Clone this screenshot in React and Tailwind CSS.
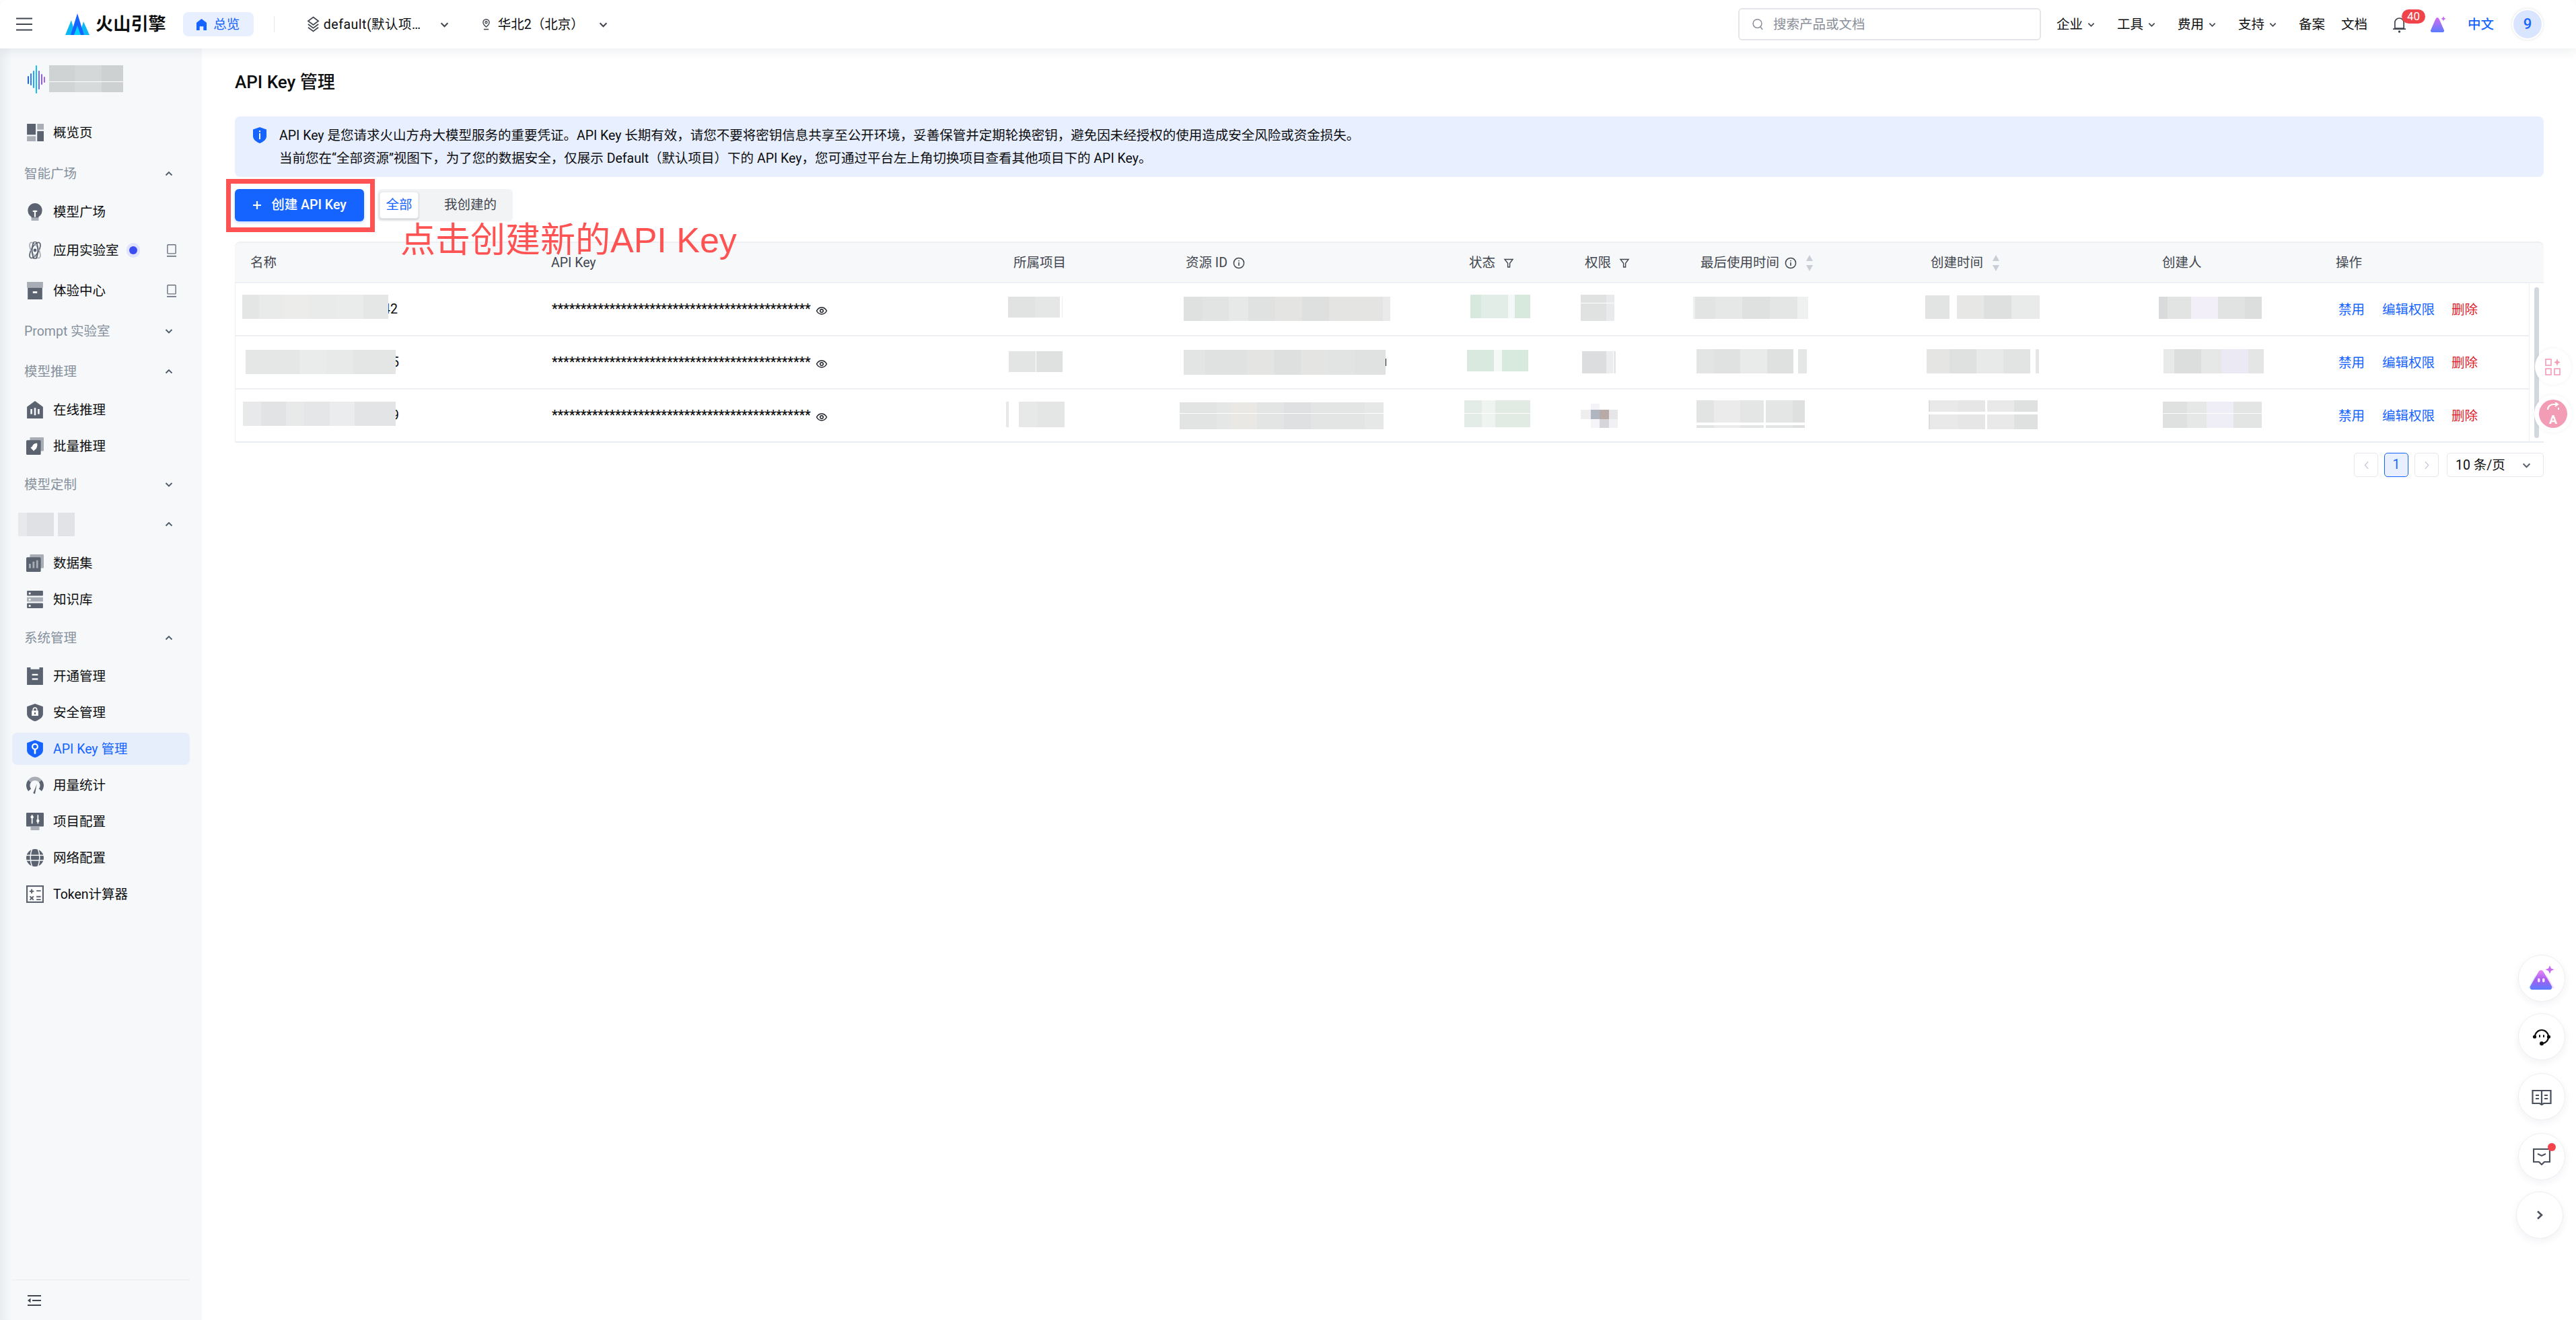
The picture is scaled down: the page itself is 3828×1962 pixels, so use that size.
import React from 'react';

const DK = '#5c6370';
const LT = '#a9aeb6';

const Ic = ({ children, cls = 'w-[26px] h-[26px]', box = '0 0 24 24' }) => (
  <svg viewBox={box} className={cls + ' shrink-0'}>{children}</svg>
);

const Chev = ({ up, cls = 'w-[12px] h-[12px]', color = '#4e5969' }) => (
  <svg viewBox="0 0 12 12" className={cls + ' shrink-0'} fill="none">
    <path d={up ? 'M1.5 8.5 6 4l4.5 4.5' : 'M1.5 4 6 8.5 10.5 4'} stroke={color} strokeWidth="1.9" />
  </svg>
);

const Info = ({ cls = 'w-[18px] h-[18px]' }) => (
  <svg viewBox="0 0 18 18" className={cls + ' shrink-0'} fill="none">
    <circle cx="9" cy="9" r="7.6" stroke="#42464e" strokeWidth="1.5" />
    <path d="M9 8v5M9 5v1.6" stroke="#42464e" strokeWidth="1.6" />
  </svg>
);

const Filter = () => (
  <svg viewBox="0 0 16 16" className="w-[16px] h-[16px] shrink-0" fill="none">
    <path d="M2 2.5h12L9.6 8.2V14H6.6V8.2Z" stroke="#42464e" strokeWidth="1.4" />
  </svg>
);

const Sort = () => (
  <svg viewBox="0 0 12 28" className="w-[12px] h-[28px] shrink-0">
    <path d="M6 2 11 11H1Z" fill="#c9cdd6" />
    <path d="M6 26 1 17H11Z" fill="#c9cdd6" />
  </svg>
);

const Monitor = () => (
  <svg viewBox="0 0 18 24" className="w-[16px] h-[21px] shrink-0" fill="none">
    <rect x="2" y="2" width="14" height="15" rx="1" stroke="#6b7280" strokeWidth="1.6" />
    <path d="M1 21.5h16" stroke="#6b7280" strokeWidth="2" />
  </svg>
);

const icons = {
  overview: (
    <Ic>
      <rect x="1" y="0" width="12" height="15" fill={DK} />
      <rect x="15" y="0" width="9" height="8" fill={LT} />
      <rect x="1" y="17" width="12" height="7" fill={LT} />
      <rect x="15" y="10" width="9" height="14" fill={DK} />
    </Ic>
  ),
  bulb: (
    <Ic>
      <path d="M12 0a10 10 0 0 1 5 18.6V20H7v-1.400A10 10 0 0 1 12 0Z" fill={DK} />
      <rect x="7" y="20" width="10" height="4" fill={LT} />
      <path d="M12 10v9" stroke="#f6f8fa" strokeWidth="2" />
      <path d="M9 11h6" stroke="#f6f8fa" strokeWidth="2" />
    </Ic>
  ),
  atom: (
    <Ic>
      <g fill="none" strokeWidth="1.6">
        <ellipse cx="12" cy="12" rx="5" ry="12" stroke={DK} transform="rotate(30 12 12)" />
        <ellipse cx="12" cy="12" rx="5" ry="12" stroke={LT} transform="rotate(-30 12 12)" />
        <ellipse cx="12" cy="12" rx="12" ry="4" stroke={DK} transform="rotate(90 12 12)" />
      </g>
      <circle cx="12" cy="12" r="2.200" fill={DK} />
    </Ic>
  ),
  box: (
    <Ic>
      <rect x="1" y="0" width="22" height="8" fill={LT} />
      <rect x="2" y="8" width="20" height="16" fill={DK} />
      <rect x="9" y="13" width="6" height="2.500" fill="#fff" />
    </Ic>
  ),
  bank: (
    <Ic>
      <path d="M12 0 23 8v16H1V8Z" fill={DK} />
      <path d="M7 11v7M12 9.500v10M17 11v7" stroke="#f6f8fa" strokeWidth="2.400" />
    </Ic>
  ),
  rocket: (
    <Ic>
      <rect x="5" y="0" width="19" height="19" rx="1" fill={LT} />
      <rect x="0" y="4" width="20" height="20" rx="1.500" fill={DK} />
      <path d="M15 8c-4 0-6 2-7 5l-2 1 1 1.500 2.500 2.500 1 1 1-2c3-1 4-5 3.500-9Z" fill="#fff" />
    </Ic>
  ),
  dataset: (
    <Ic>
      <rect x="5" y="0" width="19" height="19" rx="1" fill={LT} />
      <rect x="0" y="4" width="20" height="20" rx="1.500" fill={DK} />
      <path d="M5 19v-6M10 19v-9M15 19v-11" stroke={LT} strokeWidth="2.600" />
    </Ic>
  ),
  server: (
    <Ic>
      <rect x="1" y="0" width="22" height="7" rx="1" fill={DK} />
      <rect x="1" y="9" width="22" height="6" fill={LT} />
      <rect x="1" y="17" width="22" height="7" rx="1" fill={DK} />
      <rect x="3.500" y="2.500" width="2.500" height="2.500" fill="#fff" />
      <rect x="3.500" y="11" width="2.500" height="2.500" fill="#fff" />
      <rect x="3.500" y="19.500" width="2.500" height="2.500" fill="#fff" />
    </Ic>
  ),
  doc: (
    <Ic>
      <path d="M1 0h5v2.500h12V0h5v24H1Z" fill={DK} />
      <path d="M8 10h8M8 16h8" stroke="#fff" strokeWidth="2.200" />
    </Ic>
  ),
  lock: (
    <Ic>
      <path d="M12 0 23 4v10c0 5-6 8.500-11 10C7 22.500 1 19 1 14V4Z" fill={DK} />
      <rect x="7.500" y="9.500" width="9" height="7" fill="#fff" />
      <path d="M9.500 10V8a2.500 2.500 0 0 1 5 0v2" stroke="#fff" strokeWidth="1.500" fill="none" />
      <rect x="11" y="12" width="2" height="2.500" fill={DK} />
    </Ic>
  ),
  key: (
    <Ic>
      <path d="M12 0 23 4v10c0 5-6 8.500-11 10C7 22.500 1 19 1 14V4Z" fill="#1664ff" />
      <circle cx="12" cy="9" r="3.600" fill="none" stroke="#fff" strokeWidth="2" />
      <path d="M12 12v7" stroke="#fff" strokeWidth="2.400" />
    </Ic>
  ),
  gauge: (
    <Ic>
      <g fill="none" strokeWidth="5">
        <path d="M4.700 18.600A9.500 9.500 0 0 1 4.700 6.400" stroke={DK} />
        <path d="M4.700 6.400A9.500 9.500 0 0 1 19.300 6.400" stroke={LT} />
        <path d="M19.300 6.400A9.500 9.500 0 0 1 19.300 18.600" stroke={DK} />
      </g>
      <path d="M14.500 10.500 12 24 9.500 23Z" fill={DK} />
    </Ic>
  ),
  sliders: (
    <Ic>
      <rect x="0" y="0" width="24" height="19" rx="1" fill={DK} />
      <rect x="6" y="19" width="12" height="5" fill={LT} />
      <path d="M8 3v12M16 3v12" stroke="#fff" strokeWidth="1.600" />
      <circle cx="8" cy="6" r="2" fill="#fff" />
      <circle cx="16" cy="11" r="2" fill="#fff" />
    </Ic>
  ),
  globe: (
    <Ic>
      <circle cx="12" cy="12" r="12" fill={DK} />
      <path d="M0 8.500h24M0 15.500h24" stroke="#f6f8fa" strokeWidth="1.400" />
      <path d="M8 0c-3 7-3 17 0 24M16 0c3 7 3 17 0 24" stroke="#f6f8fa" strokeWidth="1.400" fill="none" />
    </Ic>
  ),
  calc: (
    <Ic>
      <rect x="1" y="1" width="22" height="22" fill="#fff" stroke={DK} strokeWidth="2" />
      <path d="M4.500 8h6M7.500 5v6M5 15l5 5M10 15l-5 5M14 7.500h6M14 15.500h6M14 19.500h6" stroke={DK} strokeWidth="1.800" />
    </Ic>
  ),
};

// centre positions in the sidebar come out of the mt-* values
const navItems = [
  { label: '概览页', icon: 'overview', mt: 'mt-[0px]' },
  { label: '智能广场', group: true, up: true, mt: 'mt-[13px]' },
  { label: '模型广场', icon: 'bulb', mt: 'mt-[9px]' },
  { label: '应用实验室', icon: 'atom', mt: 'mt-[9px]', dot: true, monitor: true },
  { label: '体验中心', icon: 'box', mt: 'mt-[12px]', monitor: true },
  { label: 'Prompt 实验室', group: true, mt: 'mt-[12px]' },
  { label: '模型推理', group: true, up: true, mt: 'mt-[12px]' },
  { label: '在线推理', icon: 'bank', mt: 'mt-[9px]' },
  { label: '批量推理', icon: 'rocket', mt: 'mt-[6px]' },
  { label: '模型定制', group: true, mt: 'mt-[9px]' },
  { blurGroup: true, up: true, mt: 'mt-[11px]' },
  { label: '数据集', icon: 'dataset', mt: 'mt-[10px]' },
  { label: '知识库', icon: 'server', mt: 'mt-[6px]' },
  { label: '系统管理', group: true, up: true, mt: 'mt-[9px]' },
  { label: '开通管理', icon: 'doc', mt: 'mt-[9px]' },
  { label: '安全管理', icon: 'lock', mt: 'mt-[6px]' },
  { label: 'API Key 管理', icon: 'key', mt: 'mt-[6px]', active: true },
  { label: '用量统计', icon: 'gauge', mt: 'mt-[6px]' },
  { label: '项目配置', icon: 'sliders', mt: 'mt-[6px]' },
  { label: '网络配置', icon: 'globe', mt: 'mt-[6px]' },
  { label: 'Token计算器', icon: 'calc', mt: 'mt-[6px]' },
];

function NavRow({ item }) {
  if (item.group || item.blurGroup) {
    return (
      <div className={'h-[48px] flex items-center pl-[36px] pr-[43px] justify-between ' + item.mt}>
        {item.blurGroup ? (
          <div className="flex -ml-[9px]">
            <div className="w-[13px] h-[35px] bg-[#e8e9eb]" />
            <div className="w-[40px] h-[35px] bg-[#dfe1e4]" />
            <div className="w-[6px] h-[35px]" />
            <div className="w-[25px] h-[35px] bg-[#e2e3e6]" />
          </div>
        ) : (
          <span className="pt-[2px] text-[#86909c]">{item.label}</span>
        )}
        <Chev up={item.up} />
      </div>
    );
  }
  return (
    <div
      className={
        'h-[48px] mx-[18px] rounded-[8px] flex items-center pl-[21px] pr-[19px] ' +
        item.mt +
        (item.active ? ' bg-[#e6edfb] text-[#1664ff]' : ' text-[#0c0d0e]')
      }
    >
      <div className="w-[40px] shrink-0 flex items-center">{icons[item.icon]}</div>
      <span className="pt-[2px]">{item.label}</span>
      {item.dot && (
        <span className="ml-[11px] w-[20px] h-[22px] rounded-full bg-[#e0e3fb] flex items-center justify-center">
          <span className="w-[12px] h-[12px] rounded-full bg-[#3b4df0]" />
        </span>
      )}
      {item.monitor && <span className="ml-auto flex"><Monitor /></span>}
    </div>
  );
}

function Sidebar() {
  return (
    <aside className="w-[300px] shrink-0 bg-[#f6f8fa] bg-gradient-to-r from-[#eaedf0] from-0% to-[#f6f8fa] to-[6%] flex flex-col">
      <div className="h-[101px] pl-[41px] flex items-start pt-[25px]">
        <svg viewBox="0 0 26 42" className="w-[26px] h-[42px] shrink-0" fill="none" strokeWidth="2" strokeLinecap="round">
          <path d="M1 17v10" stroke="#1664ff" />
          <path d="M5 13v16" stroke="#2a7bff" />
          <path d="M9 9v24" stroke="#1ea7ff" />
          <path d="M13 1v40" stroke="#18c0f0" />
          <path d="M17 9v26" stroke="#6d6cf5" />
          <path d="M21 14v14" stroke="#8b5cf6" />
          <path d="M25 18v7" stroke="#a465f0" />
        </svg>
        <div className="ml-[6px] w-[110px] h-[40px] flex flex-col">
          <div className="h-[24px] flex">
            <div className="w-[38px] bg-[#cfd3d3]" />
            <div className="w-[40px] bg-[#d4d8d8]" />
            <div className="w-[32px] bg-[#cdd1d1]" />
          </div>
          <div className="h-[1px] bg-white" />
          <div className="h-[15px] flex">
            <div className="w-[38px] bg-[#d0d4d4]" />
            <div className="w-[40px] bg-[#d6dada]" />
            <div className="w-[32px] bg-[#cdd1d1]" />
          </div>
        </div>
      </div>
      <nav className="flex flex-col">
        {navItems.map((it, i) => <NavRow key={i} item={it} />)}
      </nav>
      <div className="mt-auto mx-[18px] h-[60px] border-t-[1.5px] border-[#eaecef] flex items-center pl-[23px] mb-[0px]">
        <svg viewBox="0 0 20 16" className="w-[20px] h-[16px]" fill="none">
          <path d="M0 1h20M7 8h13M0 15h20" stroke="#41464f" strokeWidth="2" />
          <path d="M4.500 4.500v7L0 8Z" fill="#41464f" />
        </svg>
      </div>
    </aside>
  );
}

function TopNav({ label }) {
  return (
    <span className="flex items-center gap-[7px]">
      <span className="pt-[2px]">{label}</span>
      <Chev cls="w-[11px] h-[11px]" color="#41464f" />
    </span>
  );
}

function Header() {
  return (
    <header className="h-[72px] shrink-0 bg-white rounded-t-[10px] shadow-[0_4px_16px_rgba(30,40,60,0.08)] relative z-10 flex items-center text-[#0c0d0e]">
      <svg viewBox="0 0 24 20" className="ml-[24px] w-[24px] h-[20px] shrink-0" fill="none">
        <path d="M0 1.500h24M0 10h24M0 18.500h24" stroke="#41464f" strokeWidth="2.200" />
      </svg>
      <svg viewBox="0 0 36 32" className="ml-[49px] w-[36px] h-[32px] shrink-0">
        <path d="M0 32 9 10l6 22Z" fill="#0bb8f5" />
        <path d="M21 32l6-20 9 20Z" fill="#0bb8f5" />
        <path d="M8 32 18 0l10 32Z" fill="#1664ff" />
        <path d="M13 32l5-14 5 14Z" fill="#06d0ff" />
      </svg>
      <span className="ml-[9px] text-[26px] font-semibold tracking-[0.2px]">火山引擎</span>
      <div className="ml-[25px] w-[105px] h-[36px] rounded-[8px] bg-[#e8efff] flex items-center justify-center gap-[10px] text-[#1664ff]">
        <svg viewBox="0 0 16 18" className="w-[15px] h-[17px]"><path d="M8 0 16 6v12h-5v-6H5v6H0V6Z" fill="#1664ff" /></svg>
        <span className="pt-[2px]">总览</span>
      </div>
      <div className="ml-[30px] w-[1px] h-[24px] bg-[#e5e7eb]" />
      <svg viewBox="0 0 20 24" className="ml-[48px] w-[19px] h-[24px] shrink-0" fill="none">
        <path d="M10 1 18 7l-8 6-8-6Z" stroke="#41464f" strokeWidth="1.800" />
        <path d="M2 12l8 6 8-6M2 17l8 6 8-6" stroke="#41464f" strokeWidth="1.800" />
      </svg>
      <span className="ml-[6px] w-[172px] pt-[2px] tracking-[0.5px]">default(默认项…</span>
      <span className="ml-[1px] flex"><Chev cls="w-[13px] h-[13px]" color="#41464f" /></span>
      <svg viewBox="0 0 16 24" className="ml-[48px] w-[15px] h-[17px] shrink-0" fill="none">
        <path d="M8 1a6.500 6.500 0 0 1 6.500 6.500C14.500 12 8 17 8 17S1.500 12 1.500 7.500A6.500 6.500 0 0 1 8 1Z" stroke="#41464f" strokeWidth="2" />
        <circle cx="8" cy="7.500" r="2.200" stroke="#41464f" strokeWidth="1.800" />
        <path d="M3 22h10" stroke="#41464f" strokeWidth="2.200" />
      </svg>
      <span className="ml-[10px] pt-[2px]">华北2（北京）</span>
      <span className="ml-[22px] flex"><Chev cls="w-[13px] h-[13px]" color="#41464f" /></span>

      <div className="ml-auto w-[450px] h-[48px] rounded-[6px] border-[2px] border-[#e3e5ea] flex items-center pl-[19px] text-[#8a8f99]">
        <svg viewBox="0 0 18 20" className="w-[17px] h-[19px] shrink-0 mr-[14px]" fill="none">
          <circle cx="8" cy="8.500" r="6.800" stroke="#8a8f99" strokeWidth="1.600" />
          <path d="M13 14l3 4" stroke="#8a8f99" strokeWidth="1.600" />
        </svg>
        <span className="pt-[2px]">搜索产品或文档</span>
      </div>
      <div className="ml-[23px] flex items-center gap-[33px]">
        <TopNav label="企业" />
        <TopNav label="工具" />
        <TopNav label="费用" />
        <TopNav label="支持" />
      </div>
      <span className="ml-[33px] pt-[2px]">备案</span>
      <span className="ml-[24px] pt-[2px]">文档</span>
      <div className="ml-[38px] relative flex">
        <svg viewBox="0 0 20 26" className="w-[19px] h-[25px]" fill="none">
          <path d="M3 19V10a7 7 0 0 1 14 0v9Z" stroke="#41464f" strokeWidth="1.800" />
          <path d="M0 20h20" stroke="#41464f" strokeWidth="1.800" />
          <circle cx="10" cy="24" r="1.800" fill="#41464f" />
        </svg>
        <span className="absolute -top-[10px] left-[13px] w-[35px] h-[21px] rounded-[11px] bg-[#f0434a] text-white text-[17px] leading-[21px] text-center">40</span>
      </div>
      <svg viewBox="0 0 24 26" className="ml-[36px] w-[24px] h-[26px] shrink-0">
        <defs>
          <linearGradient id="hdrAi" x1="0" y1="0" x2="0" y2="1">
            <stop offset="0" stopColor="#d56bf0" />
            <stop offset="1" stopColor="#5b7cff" />
          </linearGradient>
        </defs>
        <path d="M11 3c1 0 2 1 3 3l7 16c.5 2-1 3-2 3H3c-1 0-2.500-1-2-3L8 6c1-2 2-3 3-3Z" fill="url(#hdrAi)" />
        <path d="M20 1l1 2.500L23.500 5 21 6l-1 2.500L19 6l-2.500-1L19 3.500Z" fill="#c46af0" />
      </svg>
      <span className="ml-[32px] pt-[2px] text-[#1664ff] font-medium">中文</span>
      <span className="ml-[27px] mr-[49px] w-[46px] h-[46px] rounded-full bg-[#d9e5ff] border-[2px] border-white shadow-[0_0_4px_rgba(0,0,0,0.12)] flex items-center justify-center text-[#1664ff] text-[22px] font-medium">9</span>
    </header>
  );
}

// template: [marginLeft, marginTop, height, [[w,color]...], hline {y,h}]
const b = (ml, mt, h, segs, line) => ({ ml, mt, h, segs, line });

const rows = [
  {
    tail: '42', tailMl: '-ml-[8px]',
    name: b(10, 17, 36, [[25, '#e4e5e5'], [35, '#e9eaea'], [40, '#ececea'], [40, '#e9eaea'], [40, '#eaebeb'], [37, '#e5e6e6']]),
    cells: [
      b(14, 20, 31, [[40, '#e1e2e2'], [37, '#e5e6e6'], [3, '#ffffff'], [1, '#eeeeee']]),
      b(19, 20, 36, [[27, '#dfe0e0'], [40, '#e2e3e3'], [29, '#e7e8e8'], [40, '#e0e1e1'], [40, '#e4e4e2'], [40, '#dedfdf'], [80, '#e4e4e3'], [11, '#eaeaea']]),
      b(24, 17, 35, [[16, '#d7e8dd'], [40, '#e2ede7'], [10, '#f4f8f6'], [23, '#d7e8dc']]),
      b(16, 17, 39, [[38, '#e0e1e1'], [12, '#e8eaec']], { y: 12, h: 1 }),
      b(11, 20, 33, [[3, '#eeeeee'], [30, '#e2e3e3'], [40, '#e6e7e7'], [41, '#dfe0e0'], [41, '#e4e5e5'], [16, '#eff0f0']]),
      b(14, 18, 35, [[36, '#e2e3e3'], [11, '#ffffff'], [40, '#e7e7e6'], [41, '#dedfdf'], [42, '#e9eaea']]),
      b(17, 20, 33, [[13, '#d9dadb'], [35, '#e2e3e3'], [40, '#f2eff9'], [40, '#e1e2e2'], [25, '#dcdddd']]),
    ],
  },
  {
    tail: '5', tailMl: '-ml-[6px]',
    name: b(15, 20, 36, [[80, '#e5e6e6'], [40, '#eaebeb'], [40, '#e8e9e9'], [63, '#e4e5e5']]),
    cells: [
      b(15, 22, 31, [[40, '#e3e4e4'], [1, '#ffffff'], [39, '#dfe0e0']]),
      { ...b(19, 20, 37, [[32, '#e3e4e4'], [62, '#e0e1e1'], [40, '#e4e4e3'], [40, '#dedfdf'], [40, '#e4e4e3'], [40, '#e2e3e3'], [46, '#e0e1e1']]), tick: true },
      b(19, 20, 32, [[40, '#d9e9df'], [12, '#f4f8f6'], [39, '#d8e9de']]),
      b(18, 22, 33, [[36, '#dcdddf'], [10, '#ebedee'], [1, '#ffffff'], [3, '#e6e7e9']]),
      b(16, 19, 36, [[25, '#e3e4e4'], [40, '#e0e1e1'], [40, '#e9eaea'], [39, '#dfe0e0'], [7, '#ffffff'], [13, '#e5e6e6']]),
      b(16, 19, 36, [[34, '#e5e6e4'], [40, '#dfe0e0'], [40, '#e8e9e9'], [40, '#e2e3e3'], [8, '#ffffff'], [5, '#e6e6e6']]),
      b(24, 19, 36, [[16, '#e8e9e9'], [40, '#dcdddd'], [30, '#e6e7e7'], [40, '#ebe9f4'], [23, '#e4e5e5']]),
    ],
  },
  {
    tail: '9', tailMl: '-ml-[6px]',
    name: b(11, 18, 36, [[27, '#e8e9ea'], [37, '#e2e3e5'], [27, '#e8e9e9'], [38, '#e5e6e7'], [37, '#ebeced'], [61, '#e3e4e5']]),
    cells: [
      b(11, 18, 38, [[4, '#e8e8e8'], [15, '#ffffff'], [27, '#e7e8e8'], [41, '#e4e5e5']]),
      b(13, 19, 40, [[55, '#e2e3e3'], [20, '#e5e6e6'], [40, '#e9e8e5'], [40, '#e3e4e4'], [40, '#dfe0e1'], [80, '#e3e4e4'], [28, '#e6e7e7']], { y: 16, h: 1 }),
      b(15, 16, 40, [[26, '#e3ece6'], [20, '#f0f4f1'], [52, '#e1ebe4']], { y: 19, h: 1 }),
      { mosaic: true },
      b(16, 16, 41, [[26, '#e2e3e3'], [39, '#ebebeb'], [35, '#e4e5e5'], [3, '#ffffff'], [40, '#e4e5e5'], [18, '#dedfdf']], { y: 33, h: 4 }),
      b(19, 16, 43, [[2, '#dddddd'], [42, '#e9e9e9'], [40, '#e6e6e6'], [3, '#ffffff'], [40, '#e9e9e9'], [35, '#dfe0e0']], { y: 17, h: 4 }),
      b(23, 18, 39, [[36, '#dfe0e0'], [29, '#e6e7e7'], [40, '#efedf6'], [42, '#e3e4e4']], { y: 17, h: 1 }),
    ],
  },
];

// blurred-out values from the screenshot, colours and widths come from the data above
function Blur({ d, cls = '' }) {
  return (
    <div
      className={'relative flex shrink-0 ' + cls}
      style={{ marginLeft: d.ml, marginTop: d.mt, height: d.h }}
    >
      {d.segs.map(([w, c], i) => (
        <div key={i} style={{ width: w, backgroundColor: c }} />
      ))}
      {d.line && (
        <div className="absolute left-0 right-0 bg-white" style={{ top: d.line.y, height: d.line.h }} />
      )}
    </div>
  );
}

const Mosaic = () => (
  <div className="ml-[16px] mt-[21px] grid grid-cols-[15px_13px_14px_13px] grid-rows-[9px_14px_13px]">
    <div /><div className="bg-[#f4f4f8]" /><div /><div />
    <div className="bg-[#eeeeee]" /><div className="bg-[#b0b5c2]" /><div className="bg-[#b8aaa6]" /><div className="bg-[#e6e6e8]" />
    <div /><div className="bg-[#f5f5f8]" /><div className="bg-[#d6d6da]" /><div className="bg-[#f1f1f4]" />
  </div>
);

const GRID = 'grid grid-cols-[447px_687px_256px_421px_172px_172px_342px_344px_258px_332px]';

function Th({ children }) {
  return <div className="pl-[23px] pt-[2px] flex items-center gap-[8px] text-[#42464e]">{children}</div>;
}

function Row({ r, last }) {
  return (
    <div className={GRID + ' h-[79px] border-b-[2px] ' + (last ? 'border-[#e9ecf0]' : 'border-[#edeff3]')}>
      <div className="flex items-start">
        <Blur d={r.name} cls="z-10" />
        <span className={'self-center ' + r.tailMl}>{r.tail}</span>
      </div>
      <div className="pl-[23px] flex items-center">
        <span className="text-[#0c0d0e] font-medium tracking-[-0.1px]">{'*'.repeat(45)}</span>
        <svg viewBox="0 0 18 18" className="ml-[7px] mt-[4px] w-[18px] h-[18px] shrink-0" fill="none">
          <path d="M1.500 9C3.500 5.500 6 4 9 4s5.500 1.500 7.500 5C14.500 12.500 12 14 9 14S3.500 12.500 1.500 9Z" stroke="#1d2129" strokeWidth="1.500" />
          <circle cx="9" cy="9" r="2.300" stroke="#1d2129" strokeWidth="1.500" />
        </svg>
      </div>
      {r.cells.map((c, i) => (
        <div key={i} className="flex items-start">
          {c.mosaic ? <Mosaic /> : <Blur d={c} />}
          {c.tick && <span className="w-[1px] h-[11px] mt-[33px] bg-[#222]" />}
        </div>
      ))}
      <div className="pl-[26px] pt-[2px] flex items-center text-[#1664ff]">
        <span>禁用</span>
        <span className="ml-[26px]">编辑权限</span>
        <span className="ml-[25px] text-[#e0202c]">删除</span>
      </div>
    </div>
  );
}

function PageBtn({ children, cls }) {
  return (
    <div className={'w-[36px] h-[36px] rounded-[5px] border-[1.5px] flex items-center justify-center ' + cls}>{children}</div>
  );
}

function Table() {
  return (
    <div className="relative">
      <div className={GRID + ' h-[62px] bg-[#f6f8fa] rounded-t-[8px] border-t-[2px] border-b-[2px] border-[#eceff3]'}>
        <Th>名称</Th>
        <Th>API Key</Th>
        <Th>所属项目</Th>
        <Th>资源 ID<Info /></Th>
        <Th>状态<span className="ml-[4px] flex"><Filter /></span></Th>
        <Th>权限<span className="ml-[4px] flex"><Filter /></span></Th>
        <Th>最后使用时间<Info /><span className="ml-[5px] flex"><Sort /></span></Th>
        <Th>创建时间<span className="ml-[5px] flex"><Sort /></span></Th>
        <Th>创建人</Th>
        <Th>操作</Th>
      </div>
      <div className="border-l-[1px] border-[#eef0f3]">
        {rows.map((r, i) => <Row key={i} r={r} last={i === rows.length - 1} />)}
      </div>
      {/* table scrollbar */}
      <div className="absolute right-0 top-[62px] w-[22px] h-[235px] bg-white border-l-[1px] border-[#edeff3] flex justify-center pt-[6px]">
        <div className="w-[7px] h-[224px] rounded-full bg-[#d3d8df]" />
      </div>
      <div className="mt-[15px] flex justify-end items-center">
        <PageBtn cls="border-[#e3e6ec]"><svg viewBox="0 0 8 14" className="w-[7px] h-[13px]" fill="none"><path d="M7 1 1.500 7 7 13" stroke="#c9cdd6" strokeWidth="1.600" /></svg></PageBtn>
        <PageBtn cls="ml-[9px] border-[#1664ff] bg-[#e8efff] text-[#1664ff]">1</PageBtn>
        <PageBtn cls="ml-[9px] border-[#e3e6ec]"><svg viewBox="0 0 8 14" className="w-[7px] h-[13px]" fill="none"><path d="M1 1l5.500 6L1 13" stroke="#c9cdd6" strokeWidth="1.600" /></svg></PageBtn>
        <div className="ml-[12px] w-[144px] h-[36px] rounded-[5px] border-[1.5px] border-[#e3e6ec] flex items-center pl-[12px] pr-[18px] justify-between">
          <span className="pt-[2px]">10 条/页</span>
          <Chev cls="w-[13px] h-[13px]" color="#5c6370" />
        </div>
      </div>
    </div>
  );
}

function Main() {
  return (
    <main className="flex-1 min-w-0 pl-[49px] pr-[48px] pt-[32px] text-[#0c0d0e]">
      <h1 className="h-[36px] leading-[36px] text-[26px] font-medium">API Key 管理</h1>
      <div className="mt-[33px] h-[90px] rounded-[8px] bg-[#e8efff] flex pl-[27px] pt-[12px]">
        <svg viewBox="0 0 20 24" className="w-[20px] h-[24px] mt-[4px] shrink-0">
          <path d="M10 0 20 3.500v10c0 5-5 8.500-10 10.500C5 22 0 18.500 0 13.500v-10Z" fill="#1664ff" />
          <path d="M10 9v9M10 5v2.200" stroke="#fff" strokeWidth="2" />
        </svg>
        <div className="ml-[19px] leading-[34px] whitespace-nowrap">
          <p>API Key 是您请求火山方舟大模型服务的重要凭证。API Key 长期有效，请您不要将密钥信息共享至公开环境，妥善保管并定期轮换密钥，避免因未经授权的使用造成安全风险或资金损失。</p>
          <p>当前您在“全部资源”视图下，为了您的数据安全，仅展示 Default（默认项目）下的 API Key，您可通过平台左上角切换项目查看其他项目下的 API Key。</p>
        </div>
      </div>
      <div className="mt-[18px] h-[48px] flex items-center relative">
        <div className="w-[192px] h-[48px] rounded-[6px] bg-[#1664ff] text-white font-medium flex items-center justify-center gap-[14px] shadow-[0_2px_4px_rgba(22,100,255,0.25)]">
          <svg viewBox="0 0 14 14" className="w-[14px] h-[14px]" fill="none"><path d="M7 1v12M1 7h12" stroke="#fff" strokeWidth="2.200" /></svg>
          创建 API Key
        </div>
        <div className="ml-[20px] w-[201px] h-[48px] rounded-[6px] bg-[#f2f3f5] flex items-center pl-[3px]">
          <div className="w-[58px] h-[40px] bg-white rounded-[4px] border-[1px] border-[#eceef1] shadow-[0_1px_3px_rgba(0,0,0,0.2)] flex items-center justify-center text-[#1664ff]">全部</div>
          <span className="ml-[38px] text-[#42464e]">我创建的</span>
        </div>
        {/* red annotation drawn on top of the screenshot */}
        <div className="absolute -left-[13px] -top-[15px] w-[221px] h-[79px] border-[7px] border-[#ff5252]" />
        <span className="absolute left-[246px] top-[44px] text-[52px] leading-[64px] text-[#ff5252] font-['Liberation_Sans','Noto_Sans_CJK_SC',sans-serif] whitespace-nowrap z-20">点击创建新的API Key</span>
      </div>
      <div className="mt-[30px]"><Table /></div>
    </main>
  );
}

function FloatBtn({ children, cls }) {
  return (
    <div className={'absolute w-[70px] h-[70px] rounded-full bg-white border-[1px] border-[#eeeff4] shadow-[0_4px_12px_rgba(30,40,80,0.06)] flex items-center justify-center ' + cls}>
      {children}
    </div>
  );
}

function Floaters() {
  return (
    <React.Fragment>
      {/* browser extension buttons, half over the right edge */}
      <div className="absolute left-[3767px] top-[518px] w-[54px] h-[54px] rounded-full bg-white shadow-[0_0_6px_rgba(0,0,0,0.05)] flex items-center justify-center">
        <svg viewBox="0 0 24 26" className="w-[24px] h-[28px]" fill="none">
          <rect x="1" y="2" width="8" height="9" stroke="#f29cb6" strokeWidth="1.600" />
          <rect x="1" y="16" width="8" height="9" stroke="#f29cb6" strokeWidth="1.600" />
          <rect x="14" y="16" width="8" height="9" stroke="#f29cb6" strokeWidth="1.600" />
          <path d="M18 1l1.500 4L23 6.500 19.500 8 18 12l-1.500-4L13 6.500 16.500 5Z" fill="#f29cb6" />
        </svg>
      </div>
      <div className="absolute left-[3766px] top-[587px] w-[56px] h-[56px] rounded-full bg-white shadow-[0_0_6px_rgba(0,0,0,0.05)] flex items-center justify-center">
        <div className="relative w-[42px] h-[42px] rounded-full bg-[#f29cb6] flex items-end justify-center pb-[3px] text-white text-[18px] font-bold leading-none">
          <svg viewBox="0 0 24 14" className="absolute left-[9px] top-[4px] w-[24px] h-[14px]" fill="none">
            <path d="M4 11c0-5 4-8 9-8h5M15 0l4 3-4 3M20 8v3" stroke="#fff" strokeWidth="2" />
          </svg>
          A
        </div>
      </div>

      <FloatBtn cls="left-[3742px] top-[1419px]">
        <svg viewBox="0 0 40 38" className="w-[40px] h-[38px]">
          <defs>
            <linearGradient id="fltAi" x1="0" y1="0" x2="0" y2="1">
              <stop offset="0" stopColor="#e58af5" />
              <stop offset="0.5" stopColor="#a65cf2" />
              <stop offset="1" stopColor="#5b7dff" />
            </linearGradient>
          </defs>
          <path d="M12 12 0 34h8Z" fill="#cfeefc" />
          <path d="M26 12 39 34h-8Z" fill="#f6dcfa" />
          <path d="M19 7c2 0 3 1 4 3l12 21c1 3-1 5-3 5H6c-2 0-4-2-3-5l12-21c1-2 2-3 4-3Z" fill="url(#fltAi)" />
          <rect x="14" y="19" width="3.500" height="6" rx="1.700" fill="#f6eaff" />
          <rect x="21" y="19" width="3.500" height="6" rx="1.700" fill="#f6eaff" />
          <path d="M32 0l2 4.500 4.500 1.500L34 8l-2 4.500L30 8l-4.500-2L30 4.500Z" fill="#c96cf0" />
        </svg>
      </FloatBtn>
      <FloatBtn cls="left-[3742px] top-[1506px]">
        <svg viewBox="0 0 28 28" className="w-[28px] h-[28px]" fill="none">
          <path d="M4 14a10 10 0 0 1 20 0c0 6-4 9-9 10" stroke="#0c0d0e" strokeWidth="2.200" />
          <circle cx="3.500" cy="14" r="2.600" fill="#0c0d0e" />
          <circle cx="24.500" cy="14" r="2.600" fill="#0c0d0e" />
          <circle cx="14" cy="24" r="3" fill="#0c0d0e" />
          <rect x="10" y="11" width="2" height="4" rx="1" fill="#0c0d0e" />
          <rect x="16" y="11" width="2" height="4" rx="1" fill="#0c0d0e" />
        </svg>
      </FloatBtn>
      <FloatBtn cls="left-[3742px] top-[1595px]">
        <svg viewBox="0 0 30 26" className="w-[30px] h-[26px]" fill="none">
          <path d="M15 4H1.500v19H12l3 2 3-2h10.500V4Z M15 4v20" stroke="#4a505c" strokeWidth="2.200" />
          <path d="M6 11h5M6 16h5M19 11h5M19 16h5" stroke="#4a505c" strokeWidth="2.200" />
        </svg>
      </FloatBtn>
      <FloatBtn cls="left-[3742px] top-[1684px]">
        <div className="relative flex">
          <svg viewBox="0 0 26 26" className="w-[26px] h-[26px]" fill="none">
            <path d="M1 2h24v19h-8l-4 4-4-4H1Z" stroke="#4a505c" strokeWidth="2.200" />
            <path d="M7 9l6 3 6-3" stroke="#4a505c" strokeWidth="2" />
          </svg>
          <span className="absolute -top-[7px] -right-[8px] w-[12px] h-[12px] rounded-full bg-[#f5424b]" />
        </div>
      </FloatBtn>
      <FloatBtn cls="left-[3739px] top-[1771px]">
        <svg viewBox="0 0 10 14" className="w-[10px] h-[14px]" fill="none">
          <path d="M2 1.500 8 7l-6 5.500" stroke="#4a505c" strokeWidth="2.600" />
        </svg>
      </FloatBtn>
    </React.Fragment>
  );
}

export default function App() {
  return (
    <div className="relative w-[3828px] h-[1962px] overflow-hidden bg-white flex flex-col text-[19.5px] leading-[28px] font-['Roboto','Noto_Sans_CJK_SC',sans-serif]">
      <Header />
      <div className="flex flex-1 min-h-0">
        <Sidebar />
        <Main />
      </div>
      <Floaters />
    </div>
  );
}
